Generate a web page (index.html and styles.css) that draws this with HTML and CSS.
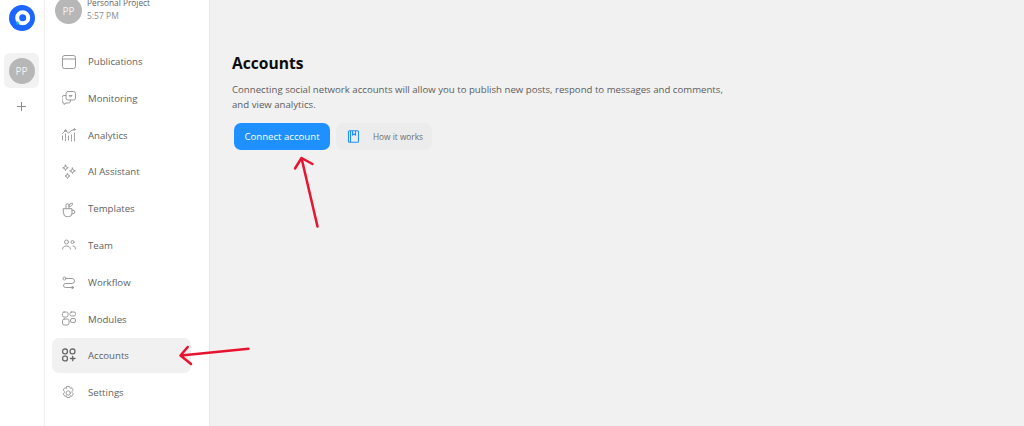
FILE: index.html
```html
<!DOCTYPE html>
<html lang="en">
<head>
<meta charset="utf-8">
<title>Accounts</title>
<link rel="stylesheet" href="styles.css">
</head>
<body>
<div class="app">
  <aside class="rail">
    <svg class="logo" width="26" height="26" viewBox="0 0 26 26"><circle cx="13" cy="13" r="13" fill="#1a66ff"/><circle cx="13.700" cy="12.800" r="5.500" fill="none" stroke="#fff" stroke-width="4"/><path d="M7.700 15.500v4.500l3-1.500z" fill="#2fc6a8"/></svg>
    <div class="project-tile"><span class="avatar avatar-rail">PP</span></div>
    <svg class="plus" width="9" height="9" viewBox="0 0 9 9"><path d="M4.500 0v9M0 4.500h9" stroke="#8a8a8a" fill="none"/></svg>
  </aside>
  <nav class="sidebar">
    <header class="project">
      <span class="avatar avatar-head">PP</span>
      <div class="project-text">
        <div class="project-name">Personal Project</div>
        <div class="project-time">5:57 PM</div>
      </div>
    </header>
    <ul class="menu">
      <li class="item"><svg class="icon" viewBox="0 0 16 16"><rect x=".5" y="1.500" width="13" height="13" rx="2"/><path d="M.5 5h13"/></svg><span>Publications</span></li>
      <li class="item"><svg class="icon" viewBox="0 0 16 16"><g transform="translate(-1 0)"><rect x="5" y="1.500" width="9.500" height="8.500" rx="2"/><path d="M5 5.500H3a2 2 0 0 0-2 2V11a2 2 0 0 0 2 2v1.500l2-1.500h2.500a2 2 0 0 0 2-2V10"/><path d="M8.500 5.500h2.500L9.700 7z"/></g></svg><span>Monitoring</span></li>
      <li class="item"><svg class="icon" viewBox="0 0 16 16"><g transform="translate(-1 0)"><path d="M1.500 9v5M4.500 7v7M7.500 9v5M10.500 8v6M13.500 6v8" stroke-dasharray="1.500 1"/><path d="M1.500 6.500L4.500 3.500 7.500 6 10.500 3.500 13.500 2.500"/><circle cx="4.500" cy="3.500" r=".8"/><circle cx="13.500" cy="2.500" r=".8"/></g></svg><span>Analytics</span></li>
      <li class="item"><svg class="icon" viewBox="0 0 16 16"><path d="M3.500 1l.8 2 2 .8-2 .8-.8 2-.8-2-2-.8 2-.8zM10.500 4l.8 2 2 .8-2 .8-.8 2-.8-2-2-.8 2-.8zM5.500 9.500l.8 1.700 1.700.8-1.700.8-.8 1.700-.8-1.700-1.700-.8 1.700-.8z"/></svg><span>AI Assistant</span></li>
      <li class="item"><svg class="icon" viewBox="0 0 16 16"><g transform="translate(-1 .7)"><path d="M2.500 7h8.500v4.500a3.500 3.500 0 0 1-3.500 3.500H6a3.500 3.500 0 0 1-3.500-3.500z"/><path d="M11 8.500h1a1.500 1.500 0 0 1 0 3.500h-1"/><path d="M5 7V3.500a1.500 1.500 0 0 1 3 0V7M8 4.500c0-2 1.500-3 3.500-3 0 2-1 3.500-3.500 3.500"/></g></svg><span>Templates</span></li>
      <li class="item"><svg class="icon" viewBox="0 0 16 16"><circle cx="4.500" cy="5" r="2"/><path d="M.5 12c0-2 1.700-3 4-3s4 1 4 3"/><circle cx="10.500" cy="5" r="1.500"/><path d="M11 9c1.500 0 2.500 1 2.500 3"/></svg><span>Team</span></li>
      <li class="item"><svg class="icon" viewBox="0 0 16 16"><circle cx="2.500" cy="4.500" r="1.500"/><path d="M4 4.500h6a2.500 2.500 0 0 1 0 5H3.500a2 2 0 0 0 0 4H9"/><circle cx="10.500" cy="13.500" r="1" class="fill"/></svg><span>Workflow</span></li>
      <li class="item"><svg class="icon" viewBox="0 0 16 16"><rect x=".5" y="1" width="5.500" height="5" rx="1.500"/><rect x="8" y="1" width="5.500" height="4" rx="1.500"/><rect x=".5" y="8" width="6.500" height="6" rx="1.800"/><rect x="8.500" y="7.500" width="5" height="4" rx="1.500"/></svg><span>Modules</span></li>
      <li class="item item-active"><svg class="icon icon-strong" viewBox="0 0 16 16"><rect x=".6" y="1" width="4.800" height="4.800" rx="2"/><rect x="8.100" y="1" width="4.800" height="4.800" rx="2"/><rect x=".6" y="8.100" width="4.800" height="4.800" rx="2"/><path d="M8.500 10.500h4.500M10.700 8.300v4.400"/></svg><span>Accounts</span></li>
      <li class="item"><svg class="icon" viewBox="0 0 16 16"><g transform="translate(-1.200 .5) scale(.93)"><circle cx="8" cy="8" r="2.300"/><path d="M6.500 1h3l.5 2 1.800-.6 1.600 2.500-1.300 1.500.1 1.200 1.300 1.500-1.600 2.500-1.800-.6-.5 2h-3l-.5-2-1.800.6-1.600-2.500 1.300-1.500V6.400L2.600 4.900l1.600-2.500 1.800.6z"/></g></svg><span>Settings</span></li>
    </ul>
  </nav>
  <main class="main">
    <h1 class="title">Accounts</h1>
    <p class="desc">Connecting social network accounts will allow you to publish new posts, respond to messages and comments, and view analytics.</p>
    <div class="actions">
      <button class="btn btn-primary">Connect account</button>
      <button class="btn btn-ghost"><svg width="13" height="13" viewBox="0 0 13 13" fill="none" stroke="#1e90ff" stroke-width="1.100"><rect x="1.500" y=".8" width="10" height="11.400" rx="1"/><path d="M3.500 1v11.200M5.500 1v4l1.500-1 1.500 1V1"/></svg><span>How it works</span></button>
    </div>
  </main>
</div>
<svg class="arrows" width="1024" height="426" viewBox="0 0 1024 426" fill="none" stroke="#e8132f" stroke-width="2.500" stroke-linecap="round" stroke-linejoin="round">
  <path d="M317.500 226.500L301.500 158M295 168.500L301.500 158 312.500 164"/>
  <path d="M248.500 348.700L181 355.500M187.700 347L180.500 355.500 191 364"/>
</svg>
</body>
</html>
```
FILE: styles.css
```css
* { box-sizing: border-box; }
html, body { margin: 0; height: 100%; overflow: hidden; }
body { font-family: "Open Sans", "Noto Sans", sans-serif; background: #f1f1f1; color: #6b6b6b; }
.app { display: flex; height: 426px; }
.rail { width: 45px; flex: none; background: #fff; border-right: 1px solid #efefef; display: flex; flex-direction: column; align-items: center; padding-top: 5px; padding-right: 1px; }
.logo { display: block; }
.project-tile { width: 35px; height: 35px; margin-top: 22px; border-radius: 6px; background: #f2f2f2; display: flex; align-items: center; justify-content: center; }
.avatar { border-radius: 50%; background: #b7b7b7; color: #f2f2f2; display: flex; align-items: center; justify-content: center; flex: none; }
.avatar-rail { width: 26px; height: 26px; font-size: 10px; }
.avatar-head { width: 27px; height: 27px; font-size: 10px; }
.plus { margin-top: 14px; }
.sidebar { width: 165px; flex: none; background: #fff; border-right: 1px solid #e6e6e6; padding: 0 18px 0 7px; }
.project { display: flex; gap: 5px; height: 38px; margin-top: -3px; padding-left: 3px; }
.project-name { font-size: 8.300px; line-height: 12px; color: #5f5f5f; }
.project-time { font-size: 8.500px; line-height: 12px; margin-top: 1px; color: #8c8c8c; }
.menu { list-style: none; margin: 9px 0 0; padding: 0; display: flex; flex-direction: column; gap: 1.800px; }
.item { height: 35px; border-radius: 7px; display: flex; align-items: center; gap: 10px; padding-left: 10px; font-size: 9.650px; color: #5f5f5f; }
.item-active { background: #f1f1f1; }
.icon { width: 16px; height: 16px; flex: none; fill: none; stroke: #9a9a9a; stroke-width: 1; stroke-linecap: round; stroke-linejoin: round; }
.icon-strong { stroke: #666; stroke-width: 1.300; }
.icon .fill { fill: #9a9a9a; }
.main { flex: 1; padding: 53px 0 0 22px; }
.title { margin: 0; font-size: 15.600px; line-height: 20px; font-weight: 700; color: #0d0d0d; }
.desc { margin: 9px 0 0; width: 500px; font-size: 9.650px; line-height: 15px; color: #5c5c5c; }
.actions { display: flex; gap: 6px; margin-top: 11px; padding-left: 2px; }
.btn { border: 0; height: 27px; border-radius: 7px; font: inherit; display: flex; align-items: center; }
.btn-primary { width: 96px; justify-content: center; background: #1e90ff; color: #fff; font-size: 9.650px; padding: 0; }
.btn-ghost { width: 96px; background: #ececec; color: #6c6c6c; font-size: 8.300px; padding: 0 0 0 11px; gap: 13px; }
.arrows { position: absolute; left: 0; top: 0; pointer-events: none; }
```
